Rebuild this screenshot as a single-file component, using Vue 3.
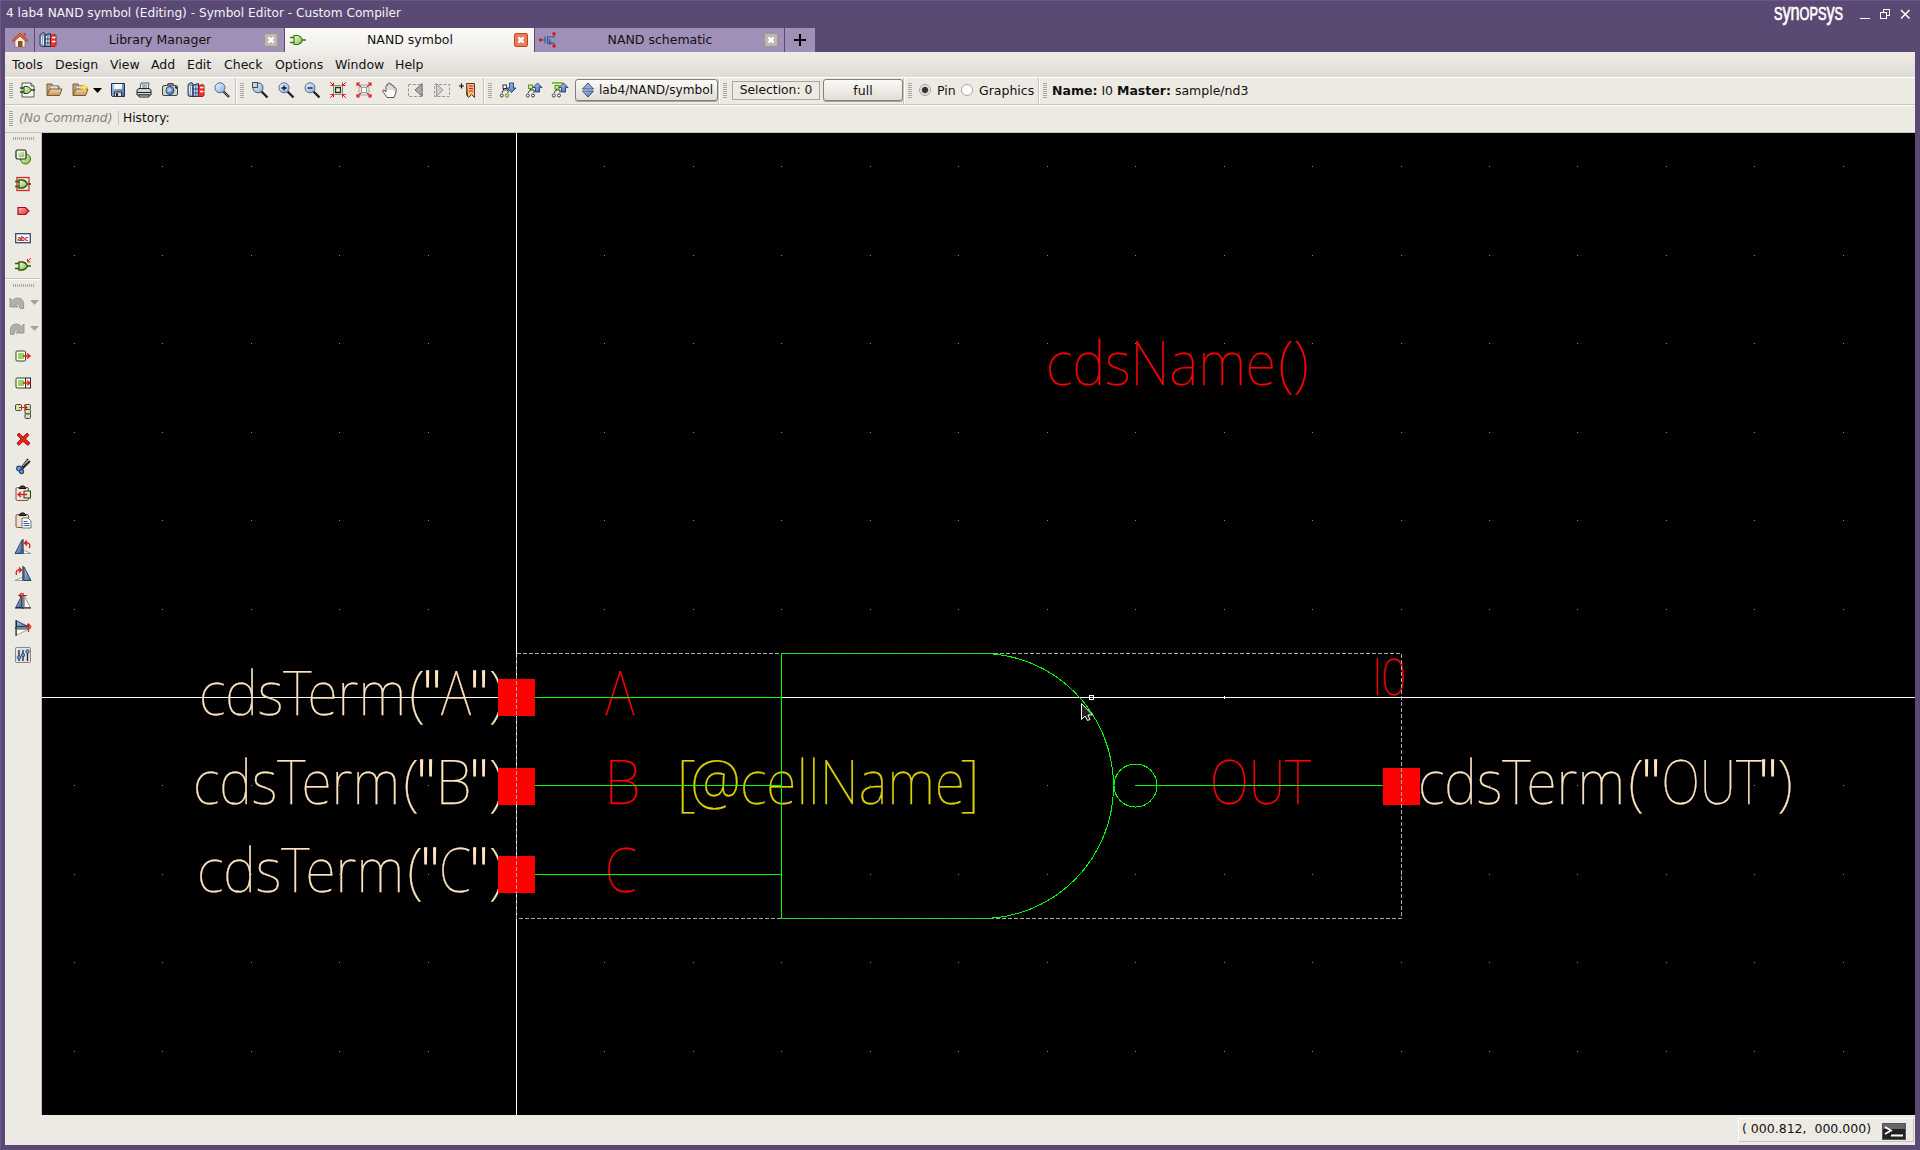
<script setup>
const icons = {
  home: '<path d="M3 8v7h10V8L8 3z" fill="#f4efe6" stroke="#8c8478" stroke-width=".8"/><path d="M0 8.500 8 1l8 7.500-1.600 1.200L8 4.200 1.600 9.700z" fill="#e2603a" stroke="#a83418" stroke-width=".7"/><path d="M11.500 1h2v4l-2-2z" fill="#c24524"/><rect x="6" y="9" width="4.500" height="6" fill="#9a4a1c"/>',
  books: '<path d="M0 2.500 3 .5l2 1v13H2l-2-1z" fill="#8aa2c2" stroke="#27364e" stroke-width=".9"/><path d="M5 3l5.500-1.500v13H5z" fill="#6f93c6" stroke="#1c2d4a" stroke-width=".9"/><path d="M10.500 3.500l4.500-1 1 1v10l-1 1h-4.500z" fill="#e8382e" stroke="#a01410" stroke-width=".9"/><path d="M1.500 4v8M3.500 4v9M6.500 4v9M9 4v9" stroke="#e4eefa" stroke-width=".9"/><path d="M12 5.500h3.500M12 9.500h3.500" stroke="#fff" stroke-width="1.600"/><path d="M5 7h5.500M5 11h5.500" stroke="#1c2d4a" stroke-width=".8"/>',
  gate: '<path d="M0 5.500h5M0 10.500h5M11 8h5" stroke="#3c7a10" stroke-width="1.400"/><path d="M4 3.500h3.500Q11 4 12.500 8 11 12 7.500 12.500H4z" fill="url(#gGreen)" stroke="#3c7a10" stroke-width="1.200"/>',
  schem: '<path d="M1 8h4M5 4.500v7M7.500 4v8M7.500 5H14V3M7.500 11H14V13M8 8h3" stroke="#2f5f9a" stroke-width="1.200" fill="none"/><path d="M9 8.500v5l3.500-2.500z" fill="#2f5f9a"/><g fill="#fff" stroke="#e01010" stroke-width="1.500"><circle cx=".5" cy="8" r="1"/><circle cx="14" cy="1.800" r="1"/><circle cx="14" cy="14" r="1"/></g>',
  newf: '<path d="M2 1h9l3 3v11H2z" fill="#f6f6f2" stroke="#555"/><path d="M11 1v3h3" fill="#ccc" stroke="#555"/><path d="M0 6h4M0 10h4M11 8h4" stroke="#1f4a08" stroke-width="1.300"/><path d="M4 4.500h3q3 .5 4.500 3.500-1.500 3-4.500 3.500H4z" fill="url(#gGreen)" stroke="#234d0c"/>',
  open: '<path d="M1 13V2h5l1 2h6v3" fill="#c9a171" stroke="#7b5a33"/><path d="M4 4h8v6H4z" fill="#ddd" stroke="#888" stroke-width=".6"/><path d="M1 13.500 4 7h12l-2.500 6.500z" fill="url(#gTan)" stroke="#7b5a33"/>',
  openstar: '<path d="M1 13V2h5l1 2h6v3" fill="#c9a171" stroke="#7b5a33"/><path d="M4 4h8v6H4z" fill="#ddd" stroke="#888" stroke-width=".6"/><path d="M1 13.500 4 7h12l-2.500 6.500z" fill="url(#gTan)" stroke="#7b5a33"/><path d="M12 2l1.200 2.300L16 5l-2.300 1.500L13 9l-1.800-2L8.500 7l1.500-2.300z" fill="#ffe84a" stroke="#e8c810" stroke-width=".5"/>',
  save: '<path d="M1.500 1.500h13v13h-12l-1-1z" fill="url(#gBlue)" stroke="#1f3354"/><path d="M4 2h8v5H4z" fill="#f3f5f8"/><path d="M4.500 10h7v4.500h-7z" fill="#d8dce2" stroke="#334"/><path d="M6 11h2v3H6z" fill="#223"/>',
  print: '<path d="M4 7 5 1h8l-1 6" fill="#fff" stroke="#555"/><path d="M6 3h5M6 5h5" stroke="#3c68a8"/><path d="M1 8l2-1.500h10L15 8v5H1z" fill="#d5d5d0" stroke="#222"/><path d="M1 10.500h14" stroke="#222"/><path d="M3 13h10v2H3z" fill="#eee" stroke="#222"/>',
  camera: '<rect x=".5" y="3.500" width="15" height="10" rx="1.500" fill="#d5d5d0" stroke="#444"/><path d="M5 3.500 6 1.500h5l1 2" fill="#888" stroke="#444"/><path d="M13 4l2 1v2l-2-1z" fill="#222"/><circle cx="8" cy="8.500" r="4" fill="url(#gBlue)" stroke="#27497a"/><circle cx="7.500" cy="8" r="1.800" fill="#b4d0f0"/>',
  search: '<path d="M9.500 9.500 15 15" stroke="#222" stroke-width="2.400"/><path d="M10 10l4.500 4.500" stroke="#aaa" stroke-width=".8"/><circle cx="6" cy="5.800" r="5" fill="url(#gLens)" stroke="#4d6f9c"/>',
  zarea: '<path d="M9.500 9.500 15.500 15.500" stroke="#222" stroke-width="2.400"/><circle cx="6" cy="5.800" r="5" fill="url(#gLens)" stroke="#40556f"/><path d="M.5 .5h5v5h-5z" fill="#c8d4de" stroke="#444"/>',
  zin: '<path d="M9.500 9.500 15.500 15.500" stroke="#222" stroke-width="2.400"/><circle cx="6" cy="5.800" r="5" fill="url(#gLens)" stroke="#4d6f9c"/><path d="M3.500 6h5M6 3.500v5" stroke="#111" stroke-width="1.300"/>',
  zout: '<path d="M9.500 9.500 15.500 15.500" stroke="#222" stroke-width="2.400"/><circle cx="6" cy="5.800" r="5" fill="url(#gLens)" stroke="#4d6f9c"/><path d="M3.500 6h5" stroke="#111" stroke-width="1.300"/>',
  fit: '<path d="M3.500 3.500h9v9h-9z" fill="#f8f6ee" stroke="#888"/><path d="M5.500 5.500h5v5h-5z" fill="#e4f0d4" stroke="#23380f" stroke-width="1.300"/><path d="M0 0l3 3M16 0l-3 3M0 16l3-3M16 16l-3-3M3.500 .5v3h-3M12.500 .5v3h3M3.500 15.500v-3h-3M12.500 15.500v-3h3" stroke="#e01c1c" fill="none"/>',
  fit2: '<path d="M3 3h10v10H3z" fill="#e8e6e2" stroke="#aaa"/><path d="M5.500 5.500h5v5h-5z" fill="#fff" stroke="#999"/><path d="M1 1l4 4M15 1l-4 4M1 15l4-4M15 15l-4-4M1 4V1h3M12 1h3v3M1 12v3h3M12 15h3v-3" stroke="#dd2222" stroke-width="1.200" fill="none"/>',
  hand: '<path d="M5 15.500 1 9.500q-1-2 1-1.500l2 2V3.500q1-1.500 2 0V1.500q1-1.500 2 0v1q1-1.500 2 .3V4q1.200-1.200 2 .3V6q1.500-1 2 .5V10l-2 5.500z" fill="#fff" stroke="#444" stroke-width=".9"/><path d="M6 4v4M8 3v5M10 4v4M12 6v3" stroke="#999" stroke-width=".7"/>',
  prev: '<path d="M.5 2.500h14v12H.5z" fill="none" stroke="#999" stroke-dasharray="3 1.500"/><path d="M14 1.500v13L7 8z" fill="#aaa" stroke="#777"/>',
  next: '<path d="M.5 2.500h15v12H.5z" fill="none" stroke="#999" stroke-dasharray="3 1.500"/><path d="M2.500 1.500v13L9 8z" fill="#ccc" stroke="#999"/>',
  mark: '<path d="M-1 4h5M1.500 1.500v5" stroke="#111" stroke-width="1.200"/><path d="M6.500 1.500h8v14l-3-3-3 3-1-1.500z" fill="#f0bc80" stroke="#5c3a14"/><path d="M9 4h4M9 6.500h4M9 9h4" stroke="#d01c1c" stroke-width="1.200"/><path d="M6.500 1.500v12" stroke="#7a4a18"/>',
  hdown: '<g fill="#fff" stroke="#333"><path d="M3.500 5v3M3.500 8 2 11M4 8h4v3"/><rect x="3" y="3" width="3.500" height="3.500"/><circle cx="1.800" cy="13.500" r="1.500"/><circle cx="7" cy="13.500" r="1.700" fill="#cbe9a4" stroke="#4f9a12"/></g><path d="M9.500 1h4v5H16l-4.500 4.500L7 6h2.500z" fill="url(#gBlue)" stroke="#1f3f70" stroke-width=".9"/>',
  hup: '<g fill="#fff" stroke="#333"><path d="M4.500 5v3M4 8 2 11M4 8h4v3"/><rect x="2.500" y="3" width="4" height="3.500" fill="#cbe9a4" stroke="#4f9a12"/><circle cx="1.800" cy="13.500" r="1.500"/><circle cx="7" cy="13.500" r="1.500"/></g><path d="M9.500 10h4V5.500H16L11.500 1 7 5.500h2.500z" fill="url(#gBlue)" stroke="#1f3f70" stroke-width=".9"/>',
  htop: '<g fill="#fff" stroke="#333"><path d="M4.500 5v3M4 8 2 11M4 8h4v3"/><rect x="3" y="3.500" width="4" height="3.500" fill="#cbe9a4" stroke="#4f9a12"/><circle cx="1.800" cy="13.500" r="1.500"/><circle cx="7" cy="13.500" r="1.500"/></g><path d="M0 1h11" stroke="#6ab81e" stroke-width="1.600"/><path d="M9.500 10h4V5.500H16L11.500 1 7 5.500h2.500z" fill="url(#gBlue)" stroke="#1f3f70" stroke-width=".9"/>',
  updown: '<path d="M8 1l5.500 6h-11z" fill="#8fb0d8" stroke="#27466f" stroke-width=".9"/><path d="M8 15l5.500-6h-11z" fill="url(#gBlue)" stroke="#27466f" stroke-width=".9"/>',
  shapes: '<circle cx="10.500" cy="10" r="5" fill="url(#gGreen)" stroke="#3c6a14"/><rect x="1" y="1" width="10" height="9" rx="1.500" fill="#cfe8ae" stroke="#222" stroke-width="1.200"/><rect x="2.300" y="2.300" width="7.400" height="6.400" fill="url(#gGreen)" stroke="#fff" stroke-width=".8"/>',
  inst: '<rect x="2" y="1.500" width="12" height="13" fill="none" stroke="#dd2222" stroke-width="1.300"/><path d="M0 5.500h5M0 10.500h5M11 8h5" stroke="#2a5a0a" stroke-width="1.600"/><path d="M4 4h3.500Q11 4.500 12.500 8 11 11.500 7.500 12H4z" fill="url(#gGreen)" stroke="#2a5a0a" stroke-width="1.300"/>',
  pin: '<path d="M3 4.500h7.500L14 8l-3.500 3.500H3z" fill="url(#gRed)" stroke="#a80c14" stroke-width="1.200"/>',
  label: '<rect x=".7" y="3.700" width="14.600" height="9" fill="#fff" stroke="#2e4a7c" stroke-width="1.300"/><text x="2.200" y="10.800" font-family="DejaVu Sans Mono" font-weight="bold" font-size="7" fill="#c01818" textLength="11.500">abc</text>',
  gateIn: '<path d="M0 6.500h5M0 11.500h5M11 9h5" stroke="#2a5a0a" stroke-width="1.600"/><path d="M4 5h3.500Q11 5.500 12.500 9 11 12.500 7.500 13H4z" fill="url(#gGreen)" stroke="#2a5a0a" stroke-width="1.300"/><path d="M16 1l-3.500 3.500M12.500 2v3h3" fill="none" stroke="#e01c1c"/>',
  undo: '<path d="M1 3v9h8L6.500 9.500Q10 7.500 11 13.500h3.500q1.500-11-6-10.500-3 0-5 2.500z" fill="#b0b0ac" stroke="#8e8e8a" stroke-width=".8"/>',
  redo: '<path d="M15 3v9H7l2.500-2.500Q6 7.500 5 13.500H1.500Q0 2.500 7.500 3q3 0 5 2.500z" fill="#b0b0ac" stroke="#8e8e8a" stroke-width=".8"/>',
  move: '<rect x="1" y="3" width="9.500" height="10" rx="1" fill="#fff" stroke="#2b4a10"/><rect x="3" y="5" width="6" height="6" fill="#9bd05a"/><path d="M8 8h7M12 5.500 15 8l-3 2.500" stroke="#e01c1c" stroke-width="1.400" fill="none"/>',
  stretch: '<rect x="1" y="3" width="9.500" height="10" rx="1" fill="#fff" stroke="#2b4a10"/><rect x="10.500" y="3" width="5" height="10" fill="#fff" stroke="#222"/><rect x="3" y="5" width="6" height="6" fill="#9bd05a"/><path d="M8 8h7M12 5.500 15 8l-3 2.500" stroke="#e01c1c" stroke-width="1.400" fill="none"/>',
  copy: '<g fill="#cde8a8" stroke="#444"><rect x=".5" y="1.500" width="6" height="6" rx="1"/><rect x="10" y="1.500" width="5.500" height="5" rx="1"/><rect x="10" y="6.500" width="5.500" height="4.500" rx="1"/><rect x="10" y="11" width="5.500" height="4.500" rx="1"/></g><path d="M4 4.500h8M9 2l3 2.500L9 7" stroke="#e01c1c" stroke-width="1.200" fill="none"/>',
  del: '<path d="M2 4l2-2 4 4 4-4 2 2-3.500 4L15 12l-2 2.500-5-4-4.500 4L2 12l4-4z" fill="#e5211b" stroke="#a80808" stroke-width=".8"/>',
  cut: '<path d="M13 1 7 9M15 3 7 11" stroke="#222" stroke-width="1.800"/><path d="M12.500 2 8 8" stroke="#ddd" stroke-width=".8"/><circle cx="4" cy="10.500" r="2.300" fill="#7ea4d4" stroke="#234a82" stroke-width="1.300"/><circle cx="6.500" cy="13.500" r="2" fill="#7ea4d4" stroke="#234a82" stroke-width="1.300"/>',
  clipin: '<rect x="1" y="2.500" width="12.500" height="13" rx="1.500" fill="#f4e6d6" stroke="#6a5a4a"/><path d="M4 3.500 6 1h3l2 2.500z" fill="#444" stroke="#111"/><rect x="9" y="6" width="6.500" height="7" fill="#d7ecb8" stroke="#333"/><path d="M3 9.500h9M6 7 3 9.500 6 12" stroke="#e01c1c" stroke-width="1.300" fill="none"/>',
  paste: '<rect x="1" y="2.500" width="12.500" height="13" rx="1.500" fill="#f0dfcc" stroke="#6a5a4a"/><path d="M4 3.500 6 1h3l2 2.500z" fill="#444" stroke="#111"/><path d="M7 6h6l3 3v7H7z" fill="#fff" stroke="#555" stroke-width=".8"/><path d="M8.500 9.500h4M8.500 11.500h6M8.500 13.500h6" stroke="#3866b0"/>',
  rotl: '<path d="M0 14.500 7 1v13.500z" fill="url(#gBlue)" stroke="#27466f"/><path d="M8 14.500V11l8 3.500z" fill="#fff" stroke="#888" stroke-width=".8"/><path d="M8 0v15" stroke="#111"/><path d="M10 4h3q2.500 1 1.500 5M12 1.500 9.500 4 12 6.500" fill="none" stroke="#d01818" stroke-width="1.300"/>',
  rotr: '<path d="M16 14.500 9 1v13.500z" fill="url(#gBlue)" stroke="#27466f"/><path d="M8 14.500V11l-8 3.500z" fill="#fff" stroke="#888" stroke-width=".8"/><path d="M8 0v15" stroke="#111"/><path d="M6 4H3Q.5 5 1.500 9M4 1.500 6.500 4 4 6.500" fill="none" stroke="#d01818" stroke-width="1.300"/>',
  fliph: '<path d="M.8 14.500 6.500 3v11.500z" fill="url(#gBlue)" stroke="#27466f"/><path d="M15.200 14.500 9.500 3v11.500z" fill="#fff" stroke="#888" stroke-width=".8"/><path d="M8 0v16M0 15h16" stroke="#111"/><path d="M12 2.500H4M7 0 4 2.500 7 5" fill="none" stroke="#d01818" stroke-width="1.200"/>',
  flipv: '<path d="M1.500 .8 13 6.500H1.500z" fill="url(#gBlue)" stroke="#27466f"/><path d="M1.500 15.200 13 9.500H1.500z" fill="#fff" stroke="#888" stroke-width=".8"/><path d="M0 8h16M1 0v16" stroke="#111"/><path d="M13.500 12V4M11 7l2.500-3L16 7" fill="none" stroke="#d01818" stroke-width="1.200"/>',
  props: '<rect x=".5" y=".5" width="15" height="15" rx="1" fill="#e4e2de" stroke="#888"/><path d="M4 3v11M8 3v11M12.500 3v11" stroke="#222" stroke-width="1.300"/><g fill="#6b94cf" stroke="#234a82" stroke-width=".8"><circle cx="4" cy="10.500" r="1.800"/><circle cx="8" cy="8" r="1.800"/><circle cx="12.500" cy="4.500" r="1.800"/></g>',
}
const menus = [['Tools', 43], ['Design', 55], ['View', 41], ['Add', 36], ['Edit', 37], ['Check', 51], ['Options', 60], ['Window', 60], ['Help', 40]]
const side = ['move', 'stretch', 'copy', 'del', 'cut', 'clipin', 'paste', 'rotl', 'rotr', 'fliph', 'flipv', 'props']
const dots = []
for (let r = -6; r <= 4; r++) for (let c = -5; c <= 15; c++) {
  if (r && c) dots.push([Math.floor(516.5 + 88.45 * c), Math.floor(697.5 + 88.45 * r)])
}
const pins = [[498, 679], [498, 768], [498, 856], [1383, 768]]
const cream = '#ffe4c0'
// Each run: [text, x, width]; runs without a width are centred on x.
const term = (name, y, x, paren, q1, mid, q2, close, w) => ({
  y, size: 61.5, color: cream,
  runs: [['cdsTerm', x, 207], ['(', paren], ['"', q1], [name, mid, null, w], ['"', q2], [')', close]],
})
const labels = [
  term('A', 715, 199, 417, 432, 456, 479, 496.5, 30),
  term('B', 804, 193, 411, 426, 453.5, 479, 496.5, 36),
  term('C', 892, 197, 415, 430, 455, 479, 496.5, 32),
  term('OUT', 804, 1418, 1636, 1651, 1711.5, 1768, 1785, 100),
  { y: 385, size: 61.5, color: '#f00', runs: [['cdsName', 1046, 230], ['(', 1286], [')', 1301]] },
  { y: 715, size: 61.5, color: '#f00', runs: [['A', 620, null, 29]] },
  { y: 804, size: 61.5, color: '#f00', runs: [['B', 622.5, null, 36]] },
  { y: 892, size: 61.5, color: '#f00', runs: [['C', 621, null, 32]] },
  { y: 804, size: 61.5, color: '#dcd000', runs: [['[', 686], ['@', 715.5, null, 50], ['cellName', 740, 225], [']', 970]] },
  { y: 804, size: 61.5, color: '#f00', runs: [['OUT', 1260.5, null, 101]] },
  { y: 695, size: 50, color: '#f00', runs: [['I', 1377.5], ['0', 1393.5, null, 25]] },
]
</script>

<template>
  <div class="win">
    <svg class="defs" width="0" height="0">
      <defs>
        <linearGradient id="gGreen" x1="0" y1="0" x2="1" y2="1"><stop offset="0" stop-color="#f2fbe6" /><stop offset="1" stop-color="#78bc34" /></linearGradient>
        <linearGradient id="gBlue" x1="0" y1="0" x2="1" y2="1"><stop offset="0" stop-color="#b8d0ec" /><stop offset="1" stop-color="#3865a6" /></linearGradient>
        <linearGradient id="gLens" x1="0" y1="0" x2="1" y2="1"><stop offset="0" stop-color="#f0f6fc" /><stop offset="1" stop-color="#86aee0" /></linearGradient>
        <linearGradient id="gTan" x1="0" y1="0" x2="0" y2="1"><stop offset="0" stop-color="#f0d8b4" /><stop offset="1" stop-color="#c89458" /></linearGradient>
        <linearGradient id="gRed" x1="0" y1="0" x2="1" y2="1"><stop offset="0" stop-color="#ffb4b4" /><stop offset="1" stop-color="#e02430" /></linearGradient>
      </defs>
    </svg>
    <header class="title">
      <span class="caption">4 lab4 NAND symbol (Editing) - Symbol Editor - Custom Compiler</span>
      <svg class="brand" width="72" height="24"><text x="2" y="19" textLength="69" lengthAdjust="spacingAndGlyphs">S<tspan class="tall">yn</tspan>OPS<tspan class="tall">y</tspan>S</text></svg>
      <svg class="ctl" width="52" height="16" fill="none" stroke="#fff" shape-rendering="crispEdges"><path d="M0 12.500h10M20.500 6.500h6v6h-6zM23.500 6v-3h6v6h-3" /><path d="M41 4l8.500 8.500M49.500 4 41 12.500" stroke-width="1.500" shape-rendering="auto" /></svg>
    </header>
    <nav class="tabs">
      <div class="tab homeTab"><svg class="ic" viewBox="0 0 16 16" v-html="icons.home" /></div>
      <div class="tab doc"><svg class="ic" viewBox="0 0 16 16" v-html="icons.books" /><span>Library Manager</span><svg class="x" viewBox="0 0 14 14"><path d="M4 4l6 6M10 4l-6 6" /></svg></div>
      <div class="tab doc on"><svg class="ic" viewBox="0 0 16 16" v-html="icons.gate" /><span>NAND symbol</span><svg class="x" viewBox="0 0 14 14"><path d="M4 4l6 6M10 4l-6 6" /></svg></div>
      <div class="tab doc"><svg class="ic" viewBox="0 0 16 16" v-html="icons.schem" /><span>NAND schematic</span><svg class="x" viewBox="0 0 14 14"><path d="M4 4l6 6M10 4l-6 6" /></svg></div>
      <div class="tab plus"><svg width="12" height="12"><path d="M0 6h12M6 0v12" stroke="#000" stroke-width="2" /></svg></div>
    </nav>
    <div class="menu"><span v-for="m in menus" :key="m[0]" :style="{ width: m[1] + 'px' }">{{ m[0] }}</span></div>
    <div class="bar tools">
      <section class="g1">
        <b class="grip" />
        <svg v-for="n in ['newf', 'open', 'openstar']" :key="n" class="ic" viewBox="0 0 16 16" v-html="icons[n]" />
        <svg class="caret" width="9" height="5"><path d="M0 0h9L4.500 5z" /></svg>
        <svg v-for="n in ['save', 'print', 'camera', 'books', 'search']" :key="n" class="ic" viewBox="0 0 16 16" v-html="icons[n]" />
      </section>
      <section class="g2">
        <b class="grip" />
        <svg v-for="n in ['zarea', 'zin', 'zout', 'fit', 'fit2', 'hand', 'prev', 'next', 'mark']" :key="n" class="ic" viewBox="0 0 16 16" v-html="icons[n]" />
      </section>
      <section class="g3">
        <b class="grip" />
        <svg v-for="n in ['hdown', 'hup', 'htop']" :key="n" class="ic" viewBox="0 0 16 16" v-html="icons[n]" />
        <button class="path"><svg class="ic" viewBox="0 0 16 16" v-html="icons.updown" />lab4/NAND/symbol</button>
      </section>
      <section class="g4"><b class="grip" /><span class="sel">Selection: 0</span><button class="full">full</button></section>
      <section class="g5"><b class="grip" /><i class="radio on" /><span class="pin">Pin</span><i class="radio" /><span>Graphics</span></section>
      <section class="g6"><b class="grip" /><span class="name"><strong>Name:</strong> I0 <strong>Master:</strong> sample/nd3</span></section>
    </div>
    <div class="bar cmd"><b class="grip" /><em>(No Command)</em><span>History:</span></div>
    <main>
      <aside>
        <div class="block first">
          <b class="hgrip" />
          <div v-for="n in ['shapes', 'inst', 'pin', 'label', 'gateIn']" :key="n" class="cell"><svg class="ic" viewBox="0 0 16 16" v-html="icons[n]" /></div>
        </div>
        <div class="block">
          <b class="hgrip" />
          <div v-for="n in ['undo', 'redo']" :key="n" class="cell un"><svg class="ic" viewBox="0 0 16 16" v-html="icons[n]" /><svg width="10" height="6"><path d="M0 0h9L4.500 5z" fill="#a5a5a0" /></svg></div>
          <div v-for="n in side" :key="n" class="cell" :class="n"><svg class="ic" viewBox="0 0 16 16" v-html="icons[n]" /></div>
        </div>
      </aside>
      <svg class="canvas" width="1873" height="982" viewBox="42 133 1873 982">
        <g shape-rendering="crispEdges">
          <rect v-for="(d, i) in dots" :key="i" :x="d[0]" :y="d[1]" width="1" height="1" fill="#868686" />
          <path d="M42 697.500H1915M516.500 133V1115" stroke="#fff" />
          <path d="M1224.500 696v3" stroke="#fff" />
        </g>
        <g v-for="(l, i) in labels" :key="i" class="big" :font-size="l.size" :fill="l.color" :stroke="l.color">
          <text
            v-for="(r, j) in l.runs" :key="j" :x="r[1]" :y="l.y"
            :text-anchor="r[2] ? 'start' : 'middle'" :textLength="r[2] || r[3]" lengthAdjust="spacingAndGlyphs"
            :class="{ quote: r[0] === '&quot;', bar1: r[0] === 'I' }"
          >{{ r[0] }}</text>
        </g>
        <rect v-for="(p, i) in pins" :key="i" :x="p[0]" :y="p[1]" width="37" height="37" fill="#f00" />
        <g fill="none" stroke="#0f0" shape-rendering="crispEdges">
          <path d="M535 697.500h246M535 785.500h246M535 874.500h246M781.500 653v266" />
          <path d="M781 653.500H981.500A132 132.500 0 0 1 981.500 918.500H781" />
          <circle cx="1135.500" cy="785.500" r="21.500" />
          <path d="M1135 785.500h248" />
        </g>
        <path d="M516.500 653.500H781M994 653.500h407.500V918.500H994M781 918.500H516.500V653.500" fill="none" stroke="#a4acb4" stroke-dasharray="4 2" shape-rendering="crispEdges" />
        <path d="M781 653.500h213M781 918.500h213" stroke="#30c838" stroke-dasharray="4 2" />
        <path d="M1089.500 695.500h4v4h-4z" fill="#000" stroke="#fff" shape-rendering="crispEdges" />
        <path d="M1089 697.500h5" stroke="#fff" shape-rendering="crispEdges" />
        <path d="M1081.500 703.500v16l3.500-3.500 2.500 4.500 2.500-1-2-4.500h4.500z" fill="#222" stroke="#fff" />
      </svg>
    </main>
    <footer>
      <div class="status"><span>( 000.812,&nbsp; 000.000)</span><svg width="24" height="17"><rect x=".5" y=".5" width="23" height="16" fill="#222" stroke="#555" /><rect x="1" y="1" width="22" height="5" fill="#666" /><path d="M3 4l6 3.500L3 11M9 12.500h12" fill="none" stroke="#fff" stroke-width="1.800" /></svg></div>
    </footer>
  </div>
</template>

<style>
body { margin: 0; overflow: hidden; }
</style>
<style scoped>
.win { width: 1920px; height: 1150px; box-sizing: border-box; padding: 0 5px 5px 4px; background: #5a4973; border-top: 1px solid #6c568e; border-left: 1px solid #6c568e; display: flex; flex-direction: column; font: 12.500px "DejaVu Sans", sans-serif; color: #111; }
.defs { position: absolute; }
.title { height: 27px; display: flex; align-items: flex-start; color: #f4f1f8; }
.caption { flex: 1; padding-left: 1px; line-height: 24px; white-space: pre; font-size: 12.150px; }
.brand { margin-right: 4px; overflow: visible; font: 18px "Liberation Sans", sans-serif; fill: #fff; }
.brand text { stroke: #fff; stroke-width: .7; }
.tall { font-size: 23px; }
.ctl { margin: 5px 3px 0 12px; }
.ic { width: 16px; height: 16px; flex: none; fill: none; overflow: visible; }
.tabs { display: flex; gap: 1px; height: 24px; }
.tab { background: #a08fb7; display: flex; align-items: center; box-sizing: border-box; }
.homeTab { width: 29px; padding-left: 7px; }
.doc { width: 249px; padding: 0 6px 0 5px; }
.doc.on { background: linear-gradient(#fbfaf7, #f0eee9); }
.doc span { flex: 1; text-align: center; line-height: 24px; }
.plus { width: 30px; justify-content: center; }
.x { width: 14px; height: 14px; flex: none; box-sizing: border-box; border: 1px solid #9c9890; border-radius: 2px; background: #bdb9b2; fill: none; stroke: #fff; stroke-width: 2.800; }
.on .x { background: #e08058; border-color: #d23c28; }
.menu { height: 25px; background: linear-gradient(#efece7, #dfdcd6); display: flex; padding-left: 7px; line-height: 25px; }
.bar { height: 28px; box-sizing: border-box; background: #edeae3; border-top: 1px solid #fff; border-bottom: 1px solid #c6c3bc; display: flex; align-items: center; }
.tools section { display: flex; align-items: center; height: 26px; box-sizing: border-box; border-right: 1px solid #c6c3bc; padding-left: 4px; padding-bottom: 2px; box-shadow: 1px 0 #fff; }
.tools section.g6 { border: 0; box-shadow: none; }
.grip { width: 4px; height: 16px; flex: none; background: repeating-linear-gradient(#aaa69e 0 1px, #edeae3 1px 2px); }
.tools .grip { margin-top: 2px; }
.g1 { width: 231px; }
.g1 .ic, .g2 .ic { margin-right: 10px; }
.g1 .grip { margin-right: 7px; }
.g1 .ic:nth-of-type(3) { margin-right: 5px; }
.caret { margin-right: 8px; fill: #000; flex: none; }
.g2 { width: 248px; }
.g2 .grip { margin-right: 8px; }
.g3 { width: 235px; }
.g3 .grip { margin-right: 8px; }
.g3 > .ic { margin-right: 10px; }
button { font: inherit; color: inherit; box-sizing: border-box; height: 22px; border: 1px solid #857e72; border-radius: 3px; background: linear-gradient(#fbfaf7, #e2ded5); padding: 0; box-shadow: 0 1px #aaa59a; }
.path { width: 143px; margin-left: -3px; display: flex; align-items: center; justify-content: center; gap: 3px; flex: none; font-size: 12.150px; }
.g4 { width: 185px; }
.sel { width: 86px; height: 17px; margin: 0 3px 0 5px; border: 1px solid #aaa59c; line-height: 16px; text-align: center; white-space: nowrap; flex: none; font-size: 12.300px; }
.full { width: 80px; flex: none; }
.g5 { width: 135px; white-space: nowrap; }
.radio { width: 10px; height: 10px; flex: none; border: 1px solid #a8a49b; border-radius: 50%; background: #fff; margin: 0 6px 0 6px; }
.radio.on { background: radial-gradient(#2c3236 0 2.500px, #e8e6e2 3.800px); margin-left: 7px; }
.pin { width: 18px; }
.name { margin-left: 5px; white-space: pre; }
.cmd { padding: 0 0 2px 4px; }
.cmd .grip { margin-top: 2px; }
.cmd em { color: #868278; margin-left: 6px; padding-right: 5px; border-right: 1px solid #c6c3bc; width: 94px; white-space: nowrap; font-size: 12.300px; }
.cmd span { margin-left: 4px; font-size: 12.200px; }
main { display: flex; height: 982px; }
aside { width: 37px; box-sizing: border-box; background: #edeae3; border-right: 1px solid #c6c3bc; }
.block { display: flow-root; box-sizing: border-box; }
.first { border-bottom: 1px solid #c6c3bc; height: 146px; }
.block + .block { border-top: 1px solid #fff; }
.hgrip { display: block; width: 22px; height: 3px; margin: 4px 0 3px 8px; background: repeating-linear-gradient(90deg, #aaa69e 0 1px, #edeae3 1px 2px); }
.cell { height: 27px; display: flex; align-items: center; padding-left: 10px; }
.cell.un { height: 26px; padding-left: 4px; gap: 5px; }
.cell.copy, .cell.del { margin-top: 1px; }
.canvas { display: block; background: #000; }
.big { font-family: "Noto Sans", sans-serif; font-weight: 100; stroke-width: .25; }
.quote { stroke-width: 1.400; }
.bar1 { font-family: Inter, sans-serif; }
footer { height: 30px; background: #edeae3; display: flex; justify-content: flex-end; padding: 3px 1px 4px; box-sizing: border-box; }
.status { width: 176px; height: 24px; box-sizing: border-box; border: 1px solid; border-color: #fff #c6c3bc #c6c3bc #fff; display: flex; align-items: center; padding: 0 7px 3px 3px; justify-content: space-between; white-space: nowrap; }
.status svg { margin-top: 5px; }
</style>
